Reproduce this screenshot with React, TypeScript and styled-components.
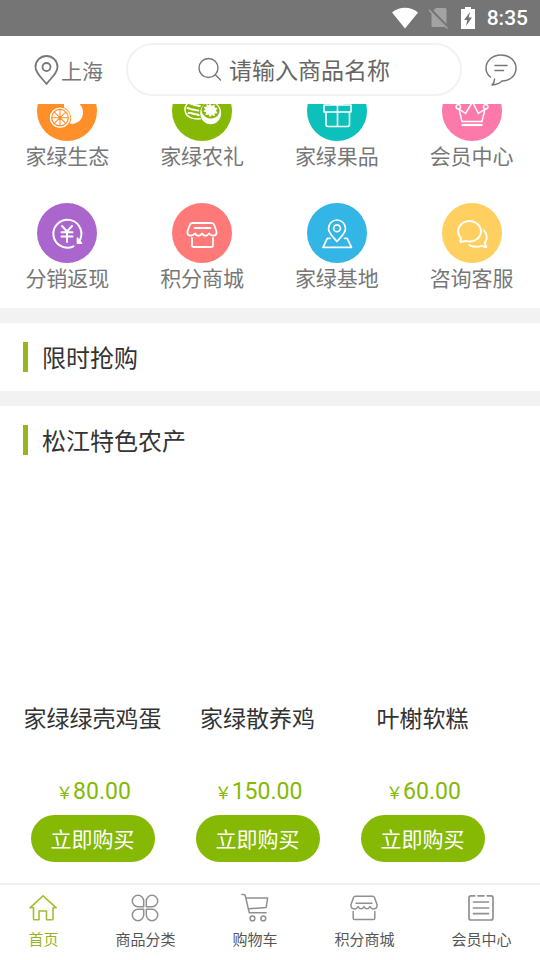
import React from "react";
import styled, { createGlobalStyle } from "styled-components";

const GlobalStyle = createGlobalStyle`
  *, *::before, *::after { box-sizing: border-box; }
  body {
    margin: 0;
    background: #fff;
    color: #333;
    font-family: "Noto Sans CJK SC", sans-serif;
  }
  a { color: inherit; text-decoration: none; }
  button, input { font-family: inherit; }
  h2, h3, p { margin: 0; font-weight: 400; }
  svg { display: block; flex: none; }
`;

const Page = styled.div`
  display: flex;
  flex-direction: column;
  min-height: 100vh;
`;

const StatusBar = styled.div`
  display: flex;
  align-items: center;
  justify-content: flex-end;
  height: 36px;
  padding: 0 12px;
  background: #757575;
  color: #fff;
`;

const StatusIcons = styled.div`
  display: flex;
  align-items: center;
  gap: 9px;
  margin-right: 10px;
`;

const Clock = styled.time`
  font-family: Roboto, sans-serif;
  font-size: 21px;
  line-height: 36px;
  font-weight: 500;
`;

const Header = styled.header`
  display: flex;
  align-items: center;
  height: 68px;
  padding: 0 22px 0 34px;
  color: #777;
`;

const Location = styled.button`
  display: flex;
  align-items: center;
  gap: 2px;
  margin-right: 23px;
  padding: 0;
  border: 0;
  background: none;
  color: #777;
  font-size: 21px;
  line-height: 30px;
`;

const Search = styled.label`
  display: flex;
  flex: 1;
  align-items: center;
  justify-content: center;
  gap: 8px;
  height: 53px;
  margin-bottom: 2px;
  border: 2px solid #f2f2f2;
  border-radius: 27px;
`;

const SearchInput = styled.input`
  width: 162px;
  padding: 0;
  border: 0;
  outline: 0;
  background: none;
  color: #666;
  font-size: 23px;
  line-height: 34px;
  &::placeholder { color: #666; opacity: 1; }
`;

const IconButton = styled.button`
  margin-left: 22px;
  padding: 0;
  border: 0;
  background: none;
  color: #777;
`;

const Main = styled.main`
  flex: 1;
  overflow: hidden;
`;

const Shortcuts = styled.nav`
  display: grid;
  grid-template-columns: repeat(4, 1fr);
  row-gap: 34px;
  margin-top: -23px;
  padding: 0 1px 17px 0;
`;

const Shortcut = styled.a`
  display: flex;
  flex-direction: column;
  align-items: center;
  color: #777;
  font-size: 21px;
  line-height: 28px;
`;

const Disc = styled.span<{ $color: string }>`
  width: 60px;
  height: 60px;
  border-radius: 50%;
  background: ${(p) => p.$color};
  color: #fff;
`;

const Section = styled.section`
  border-top: 15px solid #f2f2f2;
`;

const SectionTitle = styled.h2`
  display: flex;
  align-items: center;
  gap: 14px;
  height: 68px;
  padding: 0 23px;
  font-size: 24px;
  line-height: 36px;
  &::before {
    content: "";
    width: 5px;
    height: 30px;
    background: #98b61c;
  }
`;

const Products = styled.div`
  display: grid;
  grid-template-columns: repeat(3, 1fr);
  padding: 0 35px 21px 10px;
`;

const Product = styled.article`
  display: flex;
  flex-direction: column;
  align-items: center;
`;

const Photo = styled.div`
  width: 100%;
  height: 229px;
`;

const ProductName = styled.h3`
  min-height: 74px;
  font-size: 23px;
  line-height: 28px;
  white-space: nowrap;
`;

const Price = styled.p`
  display: flex;
  align-items: baseline;
  height: 30px;
  margin-left: 2px;
  color: #85b904;
  font-family: Roboto, "Noto Sans CJK SC", sans-serif;
  font-size: 23px;
  line-height: 30px;
`;

const Currency = styled.span`
  font-size: 17px;
`;

const BuyButton = styled.button`
  width: 124px;
  height: 47px;
  margin-top: 8px;
  padding: 0 0 2px;
  border: 0;
  border-radius: 24px;
  background: #85b904;
  color: #fff;
  font-size: 21px;
  line-height: 30px;
`;

const TabBar = styled.nav`
  display: flex;
  justify-content: space-around;
  height: 77px;
  padding-top: 8px;
  border-top: 2px solid #f0f0f0;
`;

const Tab = styled.a<{ $active?: boolean }>`
  display: flex;
  flex-direction: column;
  align-items: center;
  gap: 5px;
  color: ${(p) => (p.$active ? "#98b61c" : "#555")};
  font-size: 15px;
  line-height: 22px;
  svg { color: ${(p) => (p.$active ? "#a3bf34" : "#909090")}; }
`;

type DrawingProps = { w: number; h: number; sw?: number; children: React.ReactNode };

const Drawing = ({ w, h, sw = 2, children }: DrawingProps) => (
  <svg
    width={w}
    height={h}
    viewBox={`0 0 ${w} ${h}`}
    fill="none"
    stroke="currentColor"
    strokeWidth={sw}
    strokeLinecap="round"
    strokeLinejoin="round"
    aria-hidden="true"
  >
    {children}
  </svg>
);

const OrangeIcon = () => (
  <Drawing w={60} h={60} sw={1.4}>
    <path
      d="M27 18v9c5 3 8 9 6 15.500 7 1.500 13-4 13-11 0-3-1-6-3-8V18z"
      fill="currentColor"
      stroke="none"
    />
    <circle cx="23" cy="36.700" r="10.900" fill="#ff8f28" stroke="none" />
    <circle cx="23" cy="36.700" r="9.600" />
    <circle cx="23" cy="36.700" r="7.600" fill="currentColor" stroke="none" />
    <path d="M23 29v15.400M15.300 36.700h15.400M17.600 31.300l10.800 10.800M28.400 31.300L17.600 42.100" stroke="#ff8f28" strokeWidth="1.100" />
  </Drawing>
);

const FruitIcon = () => (
  <Drawing w={60} h={60} sw={1.5}>
    <path d="M30 37.500c-8 1.500-17-1-17-9 0-6 6-10 13-10 4 0 8 1 10 3" />
    <path d="M15.500 27c2 0 3 1.500 5 1.500s3 1 6 1M18 22.500c2 0 3 1.500 5 1.500s3 1 5 1M23 20c3 0 4 1 6 1.500M16.500 32c3-.5 4 1 6 1s3 1 5 1" strokeWidth="1.900" />
    <ellipse cx="38.700" cy="31.500" rx="11.500" ry="12.200" fill="#85b904" stroke="none" />
    <ellipse cx="38.700" cy="32" rx="10.500" ry="11.200" fill="currentColor" stroke="none" />
    <ellipse cx="38.500" cy="29.500" rx="9" ry="8" fill="#85b904" stroke="none" transform="rotate(15 38.500 29.500)" />
    <path
      d="M38 22.500l1.800 2.500 2.700-1.500.3 3 2.700.5-1.500 2.500 1.500 2.700-3 .3.3 2.700-3-1.300-1.800 2.300-1.500-2.700-3 .8.5-3-2.700-1 2-1.800-1.700-2.500 3-.3-.3-2.700 2.700 1.300z"
      fill="currentColor"
      stroke="none"
    />
  </Drawing>
);

const GiftIcon = () => (
  <Drawing w={60} h={60} sw={1.6}>
    <path d="M19 31v12.500q0 2 2 2h19.500q2 0 2-2V31M17 24h27v7H17zM30.500 24v21M30 23c-3-5-8-6-8-2 0 2 4 2 8 2 4 0 9 0 9-2 0-4-6-3-9 2" />
  </Drawing>
);

const CrownIcon = () => (
  <Drawing w={60} h={60} sw={1.5}>
    <circle cx="16.300" cy="25.800" r="2.200" />
    <circle cx="43.700" cy="25.800" r="2.200" />
    <circle cx="30" cy="18" r="2.200" />
    <path d="M17 28l3 12.500h20L43 28l-6.500 4.500L30.500 21l-7 11.500z" />
    <path d="M19.500 44h21" strokeWidth="2.200" strokeLinecap="butt" />
  </Drawing>
);

const CashbackIcon = () => (
  <Drawing w={60} h={60}>
    <path d="M36.500 43.300A14 14 0 1 1 42 38.500" />
    <path d="M40.300 35v5.300h4.500z" fill="currentColor" strokeWidth="1.300" />
    <path d="M25 23l5 5.500 5-5.500M24.500 29.300h11M24.500 33.500h11M30 28.500V39" />
  </Drawing>
);

const MallIcon = () => (
  <Drawing w={60} h={60} sw={1.8}>
    <path d="M20.500 20h19q2 0 2.800 2l2.200 6.500c.7 5-5 5-7.500 2-2 3-5.500 3-7 0-2 3-5.500 3-7 0-2.500 3-8.200 3-7.500-2l2.200-6.500q.8-2 2.800-2z" />
    <path d="M22.500 25h16M20 35v7.500q0 1.500 1.500 1.500h18q1.500 0 1.500-1.500V35" />
  </Drawing>
);

const BaseIcon = () => (
  <Drawing w={60} h={60} sw={1.7}>
    <path d="M30 38.500c-4-5-8.500-8-8.500-13a8.500 8.500 0 0 1 17 0c0 5-4.500 8-8.500 13z" />
    <circle cx="30" cy="25.200" r="3.400" />
    <path d="M23 35.300h-2.700l-4.300 9h28.500l-4.300-9h-2.700" />
  </Drawing>
);

const ServiceIcon = () => (
  <Drawing w={60} h={60} sw={1.9}>
    <path d="M18.800 34.800a11.400 10.200 0 1 1 4.700 3l-5 1.400z" />
    <path d="M42 27.500c3.500 4 3.700 9 .8 12.300l1.400 4.500-4-1.500c-4.500 1.300-9.500 1.300-13-.8" />
  </Drawing>
);

const HomeIcon = () => (
  <Drawing w={30} h={30} sw={1.6}>
    <path d="M15 2.800L2 14.800h3.500V26q0 .8.800.8H11V18h7.500v8.800h5.700q.8 0 .8-.8V14.800h3.300z" />
  </Drawing>
);

const CategoryIcon = () => (
  <Drawing w={30} h={30} sw={1.5}>
    <path d="M13.700 13.700H8A5.700 5.700 0 1 1 13.700 8zM16.300 13.700V8a5.700 5.700 0 1 1 5.700 5.700zM13.700 16.300V22A5.700 5.700 0 1 1 8 16.300zM16.300 16.300H22a5.700 5.700 0 1 1-5.700 5.700z" />
  </Drawing>
);

const CartIcon = () => (
  <Drawing w={30} h={30} sw={1.5}>
    <path d="M2 1.500h2q1 0 1.300 1.200L9.200 19.700H26M6.300 5h21.400l-1.600 9.500-17.600 1.300" />
    <circle cx="12.500" cy="25.400" r="2.400" />
    <circle cx="23.300" cy="25.400" r="2.400" />
  </Drawing>
);

const StoreIcon = () => (
  <Drawing w={30} h={30} sw={1.5}>
    <path d="M6.500 3.200h17q1.500 0 2 1.400l2.500 7c.5 5-5 5.500-7.200 2-1.500 3-4.300 3-5.800 0-1.500 3-4.300 3-5.800 0-2.200 3.500-7.700 3-7.200-2l2.500-7q.5-1.400 2-1.400z" />
    <path d="M7 10.300h16M4.200 18.500v6.700q0 1.300 1.300 1.300h19q1.300 0 1.300-1.300v-6.700" />
  </Drawing>
);

const ListIcon = () => (
  <Drawing w={30} h={30} sw={1.7}>
    <path d="M8.700 2.800H5q-2 0-2 2V25q0 2 2 2h20q2 0 2-2V4.800q0-2-2-2h-3.700M12 2.800h6" />
    <path d="M7.500 9h15M7.500 15h15M7.500 20.700h15" />
  </Drawing>
);

const shortcuts = [
  { label: "家绿生态", color: "#ff8f28", Icon: OrangeIcon },
  { label: "家绿农礼", color: "#85b904", Icon: FruitIcon },
  { label: "家绿果品", color: "#0cc0bb", Icon: GiftIcon },
  { label: "会员中心", color: "#fc79a9", Icon: CrownIcon },
  { label: "分销返现", color: "#aa66cc", Icon: CashbackIcon },
  { label: "积分商城", color: "#ff7979", Icon: MallIcon },
  { label: "家绿基地", color: "#33b5e5", Icon: BaseIcon },
  { label: "咨询客服", color: "#ffd060", Icon: ServiceIcon },
];

const products = [
  { name: "家绿绿壳鸡蛋", price: "80.00" },
  { name: "家绿散养鸡", price: "150.00" },
  { name: "叶榭软糕", price: "60.00" },
];

const tabs = [
  { label: "首页", Icon: HomeIcon, active: true },
  { label: "商品分类", Icon: CategoryIcon },
  { label: "购物车", Icon: CartIcon },
  { label: "积分商城", Icon: StoreIcon },
  { label: "会员中心", Icon: ListIcon },
];

export default function App() {
  return (
    <Page>
      <GlobalStyle />
      <StatusBar>
        <StatusIcons>
          <svg width="28" height="22" viewBox="0 0 28 22" aria-hidden="true">
            <path d="M1 5.500C8-.8 20-.8 27 5.500L14 21.500z" fill="#fff" />
          </svg>
          <svg width="22" height="22" viewBox="0 0 22 22" aria-hidden="true">
            <path d="M8 1h9q1.500 0 1.500 1.500v14.500L5.500 3.500zM3.500 6L17 20H5Q3.500 20 3.500 18.500z" fill="#a3a3a3" />
            <path d="M1 3L19.500 21.500" stroke="#a3a3a3" strokeWidth="1.500" />
          </svg>
          <svg width="18" height="22" viewBox="0 0 18 22" aria-hidden="true">
            <path d="M6 0h6v2h4v20H2V2h4z" fill="#fff" />
            <path d="M11 5l-6 8h3.300l-1.300 6 6-8.500H9.700z" fill="#757575" />
          </svg>
        </StatusIcons>
        <Clock>8:35</Clock>
      </StatusBar>

      <Header>
        <Location type="button">
          <Drawing w={25} h={31} sw={1.8}>
            <path d="M12.500 29C8.500 23.500 1.500 18.500 1.500 12a11 11 0 0 1 22 0c0 6.500-7 11.500-11 17z" />
            <circle cx="12.500" cy="12" r="4" />
          </Drawing>
          上海
        </Location>
        <Search>
          <Drawing w={24} h={24} sw={1.4}>
            <circle cx="11.500" cy="11" r="9.500" />
            <path d="M18.300 17.800l5.200 5.200" />
          </Drawing>
          <SearchInput type="text" placeholder="请输入商品名称" aria-label="搜索" />
        </Search>
        <IconButton type="button" aria-label="消息">
          <Drawing w={34} h={34} sw={1.5}>
            <path d="M6.500 24C3.300 21.500 2 18.500 2 15.200 2 7.500 8.500 2 17 2s15 5.500 15 13.200S25.500 28 18 28c-2 2.300-5.500 3.600-10 4 1.800-1.500 2.500-3.500 2.500-6" />
            <path d="M11 12.500h12M11 17.500h8.500" />
          </Drawing>
        </IconButton>
      </Header>

      <Main>
        <Shortcuts aria-label="快捷入口">
          {shortcuts.map(({ label, color, Icon }) => (
            <Shortcut key={label} href="#">
              <Disc $color={color}>
                <Icon />
              </Disc>
              {label}
            </Shortcut>
          ))}
        </Shortcuts>

        <Section>
          <SectionTitle>限时抢购</SectionTitle>
        </Section>

        <Section>
          <SectionTitle>松江特色农产</SectionTitle>
          <Products>
            {products.map(({ name, price }) => (
              <Product key={name}>
                <Photo />
                <ProductName>{name}</ProductName>
                <Price>
                  <Currency>￥</Currency>
                  {price}
                </Price>
                <BuyButton type="button">立即购买</BuyButton>
              </Product>
            ))}
          </Products>
        </Section>
      </Main>

      <TabBar aria-label="主导航">
        {tabs.map(({ label, Icon, active }) => (
          <Tab key={label} href="#" $active={active} aria-current={active ? "page" : undefined}>
            <Icon />
            {label}
          </Tab>
        ))}
      </TabBar>
    </Page>
  );
}
